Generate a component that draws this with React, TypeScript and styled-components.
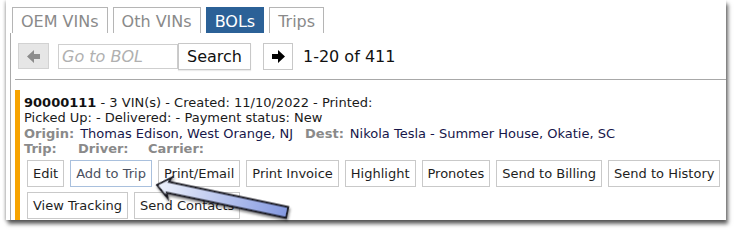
import React from "react";
import styled, { createGlobalStyle } from "styled-components";

const GlobalStyle = createGlobalStyle`
  html, body { margin: 0; padding: 0; background: #fff; }
  body { font-family: "DejaVu Sans", Verdana, sans-serif; }
`;

const Page = styled.div`
  position: relative;
  width: 736px;
  height: 240px;
  overflow: hidden;
`;

const Frame = styled.div`
  margin-left: 6px;
  width: 720px;
  height: 220px;
  background: #fff;
  box-shadow: 2px 4px 4px rgba(0, 0, 0, 0.6), -1px 1px 3px rgba(0, 0, 0, 0.25);
  padding: 7px 0 0 4px;
  box-sizing: border-box;
  display: flex;
  flex-direction: column;
`;

const Tabs = styled.div`
  display: flex;
  gap: 5px;
  padding-left: 2px;
  height: 26px;
`;

const Tab = styled.div<{ $active?: boolean }>`
  height: 26px;
  box-sizing: border-box;
  padding: 0 8px;
  border: 1px solid ${(p) => (p.$active ? "#2b6197" : "#b5b5b5")};
  border-bottom: none;
  background: ${(p) => (p.$active ? "#2b6197" : "#fff")};
  color: ${(p) => (p.$active ? "#fff" : "#8a8a8a")};
  font-size: 16px;
  line-height: 27px;
`;

const Panel = styled.div`
  flex: 1;
  border-left: 1px solid #a9a9a9;
  display: flex;
  flex-direction: column;
  padding-left: 4px;
`;

const NavRow = styled.div`
  display: flex;
  align-items: center;
  height: 47px;
  padding-left: 3px;
  border-bottom: 1px solid #a8a8a8;
  box-sizing: border-box;
`;

const ArrowBtn = styled.div<{ $disabled?: boolean }>`
  width: ${(p) => (p.$disabled ? 31 : 30)}px;
  height: ${(p) => (p.$disabled ? 26 : 27)}px;
  box-sizing: border-box;
  border: 1px solid ${(p) => (p.$disabled ? "#d2d2d2" : "#c8c8c8")};
  background: ${(p) => (p.$disabled ? "#e6e6e6" : "#fff")};
  display: flex;
  align-items: center;
  justify-content: center;
  color: ${(p) => (p.$disabled ? "#8c8c8c" : "#000")};
  margin-right: 9px;
`;

const SearchInput = styled.div`
  width: 120px;
  height: 25px;
  box-sizing: border-box;
  border: 1px solid #cfcfcf;
  color: #b0b0b0;
  font-style: italic;
  font-size: 16px;
  line-height: 23px;
  padding-left: 3px;
`;

const SearchBtn = styled.div`
  height: 27px;
  box-sizing: border-box;
  border: 1px solid #c8c8c8;
  box-shadow: 0 1px 1px rgba(0, 0, 0, 0.08);
  padding: 0 8px;
  font-size: 16px;
  line-height: 25px;
  color: #111;
  margin-right: 12px;
`;

const Count = styled.div`
  font-size: 16px;
  color: #111;
  margin-left: 1px;
`;

const Record = styled.div`
  margin-top: 10px;
  border-left: 5px solid #f7a300;
  padding: 5px 0 0 4px;
  flex: 1;
  font-size: 13px;
  line-height: 15.4px;
  color: #1a1a1a;
`;

const Line = styled.div`
  white-space: nowrap;
  display: flex;
`;

const Strong = styled.b`
  color: #111;
`;

const Text = styled.span`
  white-space: pre;
`;

const Label = styled.b<{ $w?: number }>`
  color: #8a8a8a;
  margin-right: 6px;
  ${(p) => (p.$w ? `width: ${p.$w}px; margin-right: 0;` : "")}
`;

const Value = styled.span`
  color: #17174a;
  margin-right: 12px;
`;

const Buttons = styled.div`
  display: flex;
  flex-wrap: wrap;
  gap: 5px 6px;
  padding: 3px 0 0 3px;
  width: 700px;
`;

const Btn = styled.div<{ $focus?: boolean }>`
  height: 27px;
  box-sizing: border-box;
  border: 1px solid ${(p) => (p.$focus ? "#a9c0dd" : "#c9c9c9")};
  padding: 0 5px;
  font-size: 13px;
  line-height: 25px;
  color: ${(p) => (p.$focus ? "#4a5060" : "#1e1e1e")};
  background: #fff;
`;

const Pointer = styled.svg`
  position: absolute;
  left: 150px;
  top: 168px;
  overflow: visible;
`;

const LeftArrow = () => (
  <svg width="14" height="13" viewBox="0 0 14 13">
    <path d="M0 6.5 L7 0 L7 4 L13 4 L13 9 L7 9 L7 13 Z" fill="currentColor" />
  </svg>
);
const RightArrow = () => (
  <svg width="14" height="13" viewBox="0 0 14 13">
    <path d="M14 6.5 L7 0 L7 4 L1 4 L1 9 L7 9 L7 13 Z" fill="currentColor" />
  </svg>
);

const buttons1 = [
  "Edit",
  "Add to Trip",
  "Print/Email",
  "Print Invoice",
  "Highlight",
  "Pronotes",
  "Send to Billing",
  "Send to History",
  "View Tracking",
  "Send Contacts",
];

export default function App() {
  return (
    <Page>
      <GlobalStyle />
      <Frame>
        <Tabs>
          <Tab>OEM VINs</Tab>
          <Tab>Oth VINs</Tab>
          <Tab $active>BOLs</Tab>
          <Tab>Trips</Tab>
        </Tabs>
        <Panel>
          <NavRow>
            <ArrowBtn $disabled>
              <LeftArrow />
            </ArrowBtn>
            <SearchInput>Go to BOL</SearchInput>
            <SearchBtn>Search</SearchBtn>
            <ArrowBtn>
              <RightArrow />
            </ArrowBtn>
            <Count>1-20 of 411</Count>
          </NavRow>
          <Record>
            <Line>
              <Strong>90000111</Strong>
              <Text> - 3 VIN(s) - Created: 11/10/2022 - Printed:</Text>
            </Line>
            <Line>Picked Up: - Delivered: - Payment status: New</Line>
            <Line>
              <Label>Origin:</Label>
              <Value>Thomas Edison, West Orange, NJ</Value>
              <Label>Dest:</Label>
              <Value>Nikola Tesla - Summer House, Okatie, SC</Value>
            </Line>
            <Line>
              <Label $w={54}>Trip:</Label>
              <Label $w={70}>Driver:</Label>
              <Label>Carrier:</Label>
            </Line>
            <Buttons>
              {buttons1.map((b) => (
                <Btn key={b} $focus={b === "Add to Trip"}>
                  {b}
                </Btn>
              ))}
            </Buttons>
          </Record>
        </Panel>
      </Frame>
      <Pointer width="140" height="50" viewBox="0 0 140 50">
        <defs>
          <linearGradient id="ag" x1="0" y1="0" x2="1" y2="0">
            <stop offset="0" stopColor="#eef2fc" />
            <stop offset="1" stopColor="#8499e0" />
          </linearGradient>
          <filter id="sh" x="-20%" y="-50%" width="140%" height="200%">
            <feDropShadow dx="1.5" dy="2" stdDeviation="1.2" floodColor="#000" floodOpacity="0.45" />
          </filter>
        </defs>
        <g transform="translate(7 17) rotate(11.9)" filter="url(#sh)">
          <path
            d="M0 0 L13 -10.5 L11 -5.5 L133 -5.5 L133 5.5 L11 5.5 L13 10.5 Z"
            fill="url(#ag)"
            stroke="#15151f"
            strokeWidth="1.8"
            strokeLinejoin="miter"
          />
        </g>
      </Pointer>
    </Page>
  );
}
